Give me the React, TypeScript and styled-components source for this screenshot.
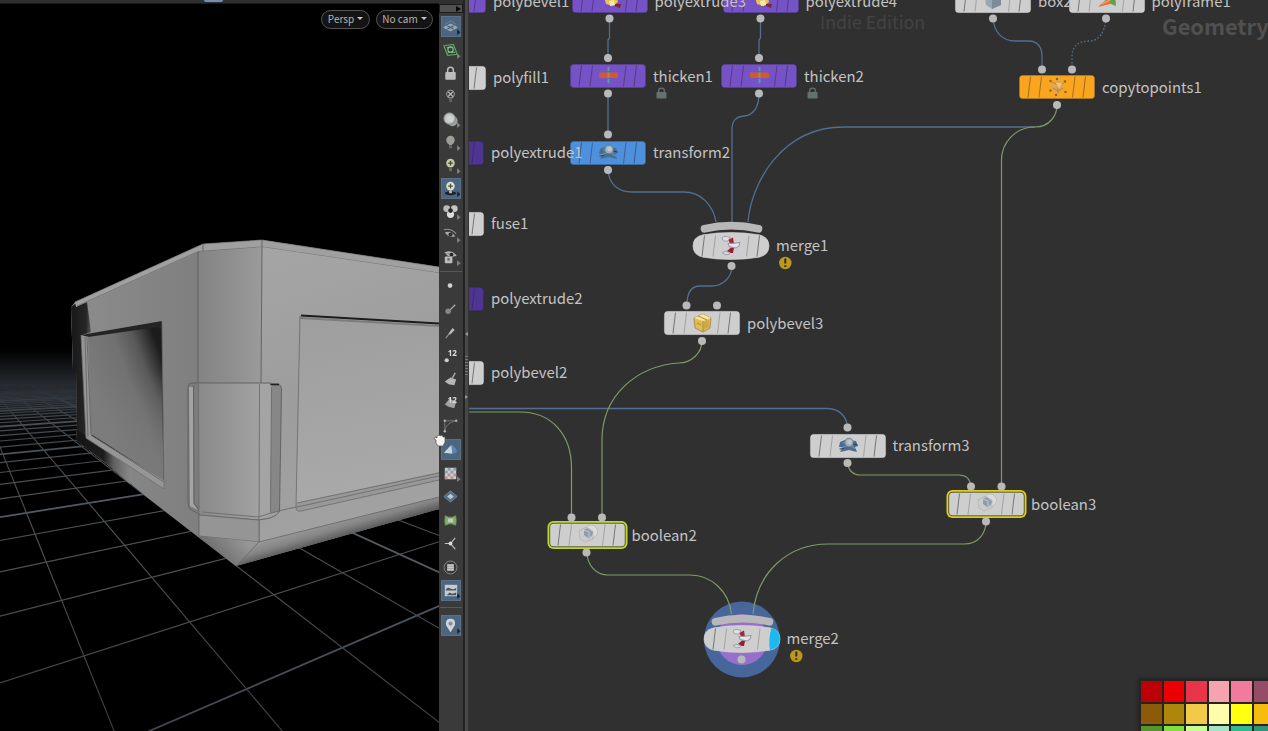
import React from "react";
import styled, { createGlobalStyle } from "styled-components";

const GlobalStyle = createGlobalStyle`
  html, body { margin: 0; padding: 0; background: #303030; overflow: hidden; }
  * { box-sizing: border-box; }
  body { font-family: "Noto Sans CJK SC", "Noto Sans", sans-serif; color: #c3c3c3; }
`;

const Shell = styled.div`
  display: flex;
  width: 1268px;
  height: 731px;
  overflow: hidden;
  background: #303030;
`;

/* ---------- 3D viewport ---------- */

const Viewport = styled.section`
  width: 439px;
  flex: none;
  display: flex;
  flex-direction: column;
  background: #000;
`;

const TopStrip = styled.div`
  height: 4px;
  flex: none;
  display: flex;
  padding-left: 204px;
  background: #303030;
  border-bottom: 1px solid #181818;
`;

const ActiveTab = styled.i`
  width: 19px;
  height: 2px;
  border-radius: 0 0 2px 2px;
  background: #7290ad;
`;

const Stage = styled.div`
  position: relative;
  flex: 1;
  min-height: 0;
`;

const SceneSvg = styled.svg`
  display: block;
  width: 439px;
  height: 727px;
`;

const CameraMenus = styled.div`
  position: absolute;
  top: 5.5px;
  right: 6px;
  display: flex;
  gap: 6px;
`;

const CameraButton = styled.button<{ $w: number }>`
  width: ${(p) => p.$w}px;
  height: 19px;
  display: flex;
  align-items: center;
  justify-content: center;
  gap: 3px;
  padding: 0 0 1px;
  border: 1px solid #555;
  border-radius: 10px;
  background: #141414;
  color: #b4b4b4;
  font-family: inherit;
  font-size: 10px;
  line-height: 16px;
  white-space: nowrap;
`;

const Caret = styled.i`
  border: 3px solid transparent;
  border-top-color: #c4c4c4;
  border-bottom: 0;
`;

const HORIZON = 355;
const depthLines = Array.from({ length: 34 }, (_, i) => {
  const n = i - 4;
  const y = HORIZON + 1 / (0.00461 + 0.00078 * n);
  return { y, major: (n + 8) % 5 === 0 };
}).filter((l) => l.y > 0);
const sideLines = Array.from({ length: 60 }, (_, i) => {
  const n = i - 6;
  return { x: -37 + 400 * (0.402 + 0.447 * n), major: (n + 6) % 5 === 0 };
});

function Scene() {
  return (
    <SceneSvg viewBox="0 4 439 727">
      <defs>
        <linearGradient id="haze" x1="0" y1="350" x2="0" y2="450" gradientUnits="userSpaceOnUse">
          <stop offset="0" stopColor="#000" />
          <stop offset=".15" stopColor="#121416" />
          <stop offset=".35" stopColor="#272b30" />
          <stop offset=".52" stopColor="#1f242a" />
          <stop offset=".7" stopColor="#0a0c0e" />
          <stop offset="1" stopColor="#000" />
        </linearGradient>
        <linearGradient id="fade" x1="0" y1="385" x2="0" y2="731" gradientUnits="userSpaceOnUse">
          <stop offset="0" stopColor="#fff" stopOpacity="0" />
          <stop offset=".1" stopColor="#fff" stopOpacity=".8" />
          <stop offset=".45" stopColor="#fff" stopOpacity=".95" />
          <stop offset="1" stopColor="#fff" stopOpacity=".7" />
        </linearGradient>
        <mask id="gridMask" maskUnits="userSpaceOnUse" x="0" y="355" width="439" height="376">
          <rect x="0" y="355" width="439" height="376" fill="url(#fade)" />
        </mask>
        <linearGradient id="leftFace" x1="86" y1="0" x2="198" y2="0" gradientUnits="userSpaceOnUse">
          <stop offset="0" stopColor="#8b8b8b" />
          <stop offset=".55" stopColor="#848484" />
          <stop offset="1" stopColor="#7f7f7f" />
        </linearGradient>
        <linearGradient id="corner" x1="198" y1="0" x2="262" y2="0" gradientUnits="userSpaceOnUse">
          <stop offset="0" stopColor="#838383" />
          <stop offset=".5" stopColor="#8e8e8e" />
          <stop offset="1" stopColor="#9b9b9b" />
        </linearGradient>
        <linearGradient id="guard" x1="198" y1="0" x2="262" y2="0" gradientUnits="userSpaceOnUse">
          <stop offset="0" stopColor="#8a8a8a" />
          <stop offset=".5" stopColor="#969696" />
          <stop offset="1" stopColor="#a3a3a3" />
        </linearGradient>
        <linearGradient id="front" x1="262" y1="250" x2="360" y2="540" gradientUnits="userSpaceOnUse">
          <stop offset="0" stopColor="#a5a5a5" />
          <stop offset=".5" stopColor="#9d9d9d" />
          <stop offset="1" stopColor="#a2a2a2" />
        </linearGradient>
        <linearGradient id="panel" x1="340" y1="320" x2="370" y2="495" gradientUnits="userSpaceOnUse">
          <stop offset="0" stopColor="#9f9f9f" />
          <stop offset="1" stopColor="#a9a9a9" />
        </linearGradient>
        <linearGradient id="recess" x1="95" y1="400" x2="168" y2="372" gradientUnits="userSpaceOnUse">
          <stop offset="0" stopColor="#7c7c7c" />
          <stop offset=".5" stopColor="#717171" />
          <stop offset=".75" stopColor="#585858" />
          <stop offset="1" stopColor="#1c1c1c" />
        </linearGradient>
        <linearGradient id="recessLow" x1="0" y1="325" x2="0" y2="480" gradientUnits="userSpaceOnUse">
          <stop offset=".3" stopColor="#7c7c7c" stopOpacity="0" />
          <stop offset="1" stopColor="#7c7c7c" stopOpacity=".8" />
        </linearGradient>
        <linearGradient id="shade" x1="74" y1="0" x2="96" y2="0" gradientUnits="userSpaceOnUse">
          <stop offset="0" stopColor="#1a1a1a" />
          <stop offset=".55" stopColor="#262626" />
          <stop offset=".85" stopColor="#6c6c6c" />
          <stop offset="1" stopColor="#8b8b8b" />
        </linearGradient>
        <linearGradient id="sill" x1="77" y1="0" x2="130" y2="0" gradientUnits="userSpaceOnUse">
          <stop offset="0" stopColor="#151515" />
          <stop offset=".5" stopColor="#1d1d1d" />
          <stop offset=".7" stopColor="#626262" />
          <stop offset="1" stopColor="#878787" />
        </linearGradient>
        <linearGradient id="under" x1="330" y1="518" x2="337" y2="542" gradientUnits="userSpaceOnUse">
          <stop offset="0" stopColor="#a0a0a0" />
          <stop offset=".5" stopColor="#858585" />
          <stop offset="1" stopColor="#4a4a4a" />
        </linearGradient>
        <linearGradient id="tip" x1="240" y1="535" x2="215" y2="558" gradientUnits="userSpaceOnUse">
          <stop offset="0" stopColor="#969696" />
          <stop offset="1" stopColor="#6c6c6c" />
        </linearGradient>
      </defs>

      <rect x="0" y="350" width="439" height="381" fill="url(#haze)" />
      <g mask="url(#gridMask)" fill="none">
        {depthLines.map((l) => (
          <path
            key={l.y}
            d={`M0 ${l.y}L1020 ${HORIZON}`}
            stroke={l.major ? "#59636d" : "#565a5e"}
            strokeWidth={l.major ? 1.8 : 1.15}
          />
        ))}
        {sideLines.map((l) => (
          <path
            key={l.x}
            d={`M-37 ${HORIZON}L${l.x} ${HORIZON + 400}`}
            stroke={l.major ? "#5b6269" : "#54585b"}
            strokeWidth={l.major ? 1.8 : 1.15}
          />
        ))}
      </g>

      {/* hull silhouette */}
      <path d="M71 307L75 302L203 244L262 240L439 267V509L236 566L220 553L187 528L147 497L108 465L76 440L77 430L76 369H73Z" fill="#858585" />
      <path d="M75 306L198 251L199 536L236 566L187 528L147 497L108 465L76 440L77 430V369H73L71 307Z" fill="url(#leftFace)" />
      <path d="M71 307L75 304L87 302L91 332L82 335L86 438L98 452L108 465L76 440L77 430L76 369H73Z" fill="url(#shade)" />
      <path d="M77 430L86 436L130 467V484L108 465L76 440Z" fill="url(#sill)" />
      <path d="M75 302L203 244L262 240L439 267V273L262 247L198 252L76 307Z" fill="#a0a0a0" />
      <path d="M77 306L198 251.500L262 247L439 273" fill="none" stroke="#727272" strokeWidth=".9" />
      <path d="M75 302L203 244L262 240L439 267" fill="none" stroke="#7a7a7a" strokeWidth=".7" />

      {/* left window */}
      <path d="M81 335L162 321L164 488L86 438Z" fill="#242424" />
      <path d="M81 335L89 337L92 436L164 480V489L86 438Z" fill="#969696" />
      <path d="M88 337L158 327L161 329L163.500 480L91 434Z" fill="url(#recess)" />
      <path d="M88 337L158 327L161 329L163.500 480L91 434Z" fill="url(#recessLow)" />
      <path d="M87 337L91 435L164 482M85 337L88 437" fill="none" stroke="#606060" strokeWidth=".8" />
      <path d="M81 335L86 438L164 489L162 321" fill="none" stroke="#6f6f6f" strokeWidth=".8" />

      {/* rounded corner */}
      <path d="M198 252L262 247L261 384H198Z" fill="url(#corner)" />
      <path d="M262 247L439 273V497L259 542V384H261Z" fill="url(#front)" />
      <path d="M198 252V384M262 247L261 384M262 240V247M203 244V251" fill="none" stroke="#5f5f5f" strokeWidth=".9" />

      {/* corner guard */}
      <path d="M198 383H262V520L200 514Z" fill="url(#guard)" />
      <path d="M259 384H272L270 514L259 519Z" fill="#a4a4a4" />
      <path d="M187.500 384Q188 382 191 383H198V513L189 507Z" fill="#7c7c7c" />
      <path d="M189 387H193.500V504L198 510L190 506Z" fill="#a4a4a4" />
      <path d="M193.500 386L194 503L199 510" fill="none" stroke="#5a5a5a" strokeWidth=".9" />
      <path d="M271.500 384H279L281.500 388L279.500 512L270.500 513Z" fill="#878787" />
      <path d="M270 384H278Q281.500 385 281.500 389L279.500 511Q278 515 270 518L259 520L202 516L190 509Q188 507 188 500V387Q188 383 192 383H271" fill="none" stroke="#5e5e5e" strokeWidth=".9" />
      <path d="M270.500 384.500H279" stroke="#222" strokeWidth="1.600" />
      <path d="M271.500 387L270.500 513M259.500 384L259 542M198.500 384L199 536M202 512L258 517L278 511L296 507" fill="none" stroke="#6c6c6c" strokeWidth=".9" />
      <path d="M199 515L259 520V542L199 536Z" fill="#959595" />
      <path d="M199 515L259 520V542L199 536Z" fill="none" stroke="#666" strokeWidth=".8" />
      <path d="M199 536L259 542L236 566L200 538Z" fill="url(#tip)" />
      <path d="M259 542L439 497V509L236 566Z" fill="url(#under)" />
      <path d="M236 566L259 542L439 497" fill="none" stroke="#6c6c6c" strokeWidth=".9" />

      {/* right window */}
      <path d="M300 317L439 325V480L301 511Q296 512 296 507Z" fill="url(#panel)" />
      <path d="M296 503L439 472V480L299 511Q296 511 296 507Z" fill="#989898" />
      <path d="M300 318L439 326" stroke="#7c7c7c" strokeWidth="2" fill="none" />
      <path d="M301 315.500L439 323.500" stroke="#1c1c1c" strokeWidth="2" fill="none" />
      <path d="M300 316L296 507Q296 512 301 511L439 480M297 503L439 473M297 507L439 476" fill="none" stroke="#686868" strokeWidth=".8" />
    </SceneSvg>
  );
}

/* ---------- display toolbar ---------- */

const Toolbar = styled.aside`
  width: 24px;
  flex: none;
  display: flex;
  flex-direction: column;
  align-items: center;
  background: #3a3a3a;
  border-top: 4px solid #303030;
`;

const Expander = styled.div`
  width: 24px;
  height: 9px;
  margin-bottom: 2.4px;
  display: flex;
  align-items: center;
  justify-content: flex-end;
  padding-right: 1px;
  border: 1px solid #1c1c1c;
  background: #505050;
`;

const ExpanderArrow = styled.i`
  border: 3px solid transparent;
  border-left: 5px solid #080808;
  border-right: 0;
`;

const ToolGroup = styled.div<{ $pitch: number }>`
  display: grid;
  grid-auto-rows: ${(p) => p.$pitch}px;
  align-items: center;
`;

const ToolButton = styled.div<{ $on?: boolean }>`
  width: 20px;
  height: 21px;
  display: flex;
  align-items: center;
  justify-content: center;
  background: ${(p) => (p.$on ? "#4d6680" : "transparent")};
  border: 1px solid ${(p) => (p.$on ? "#58718a" : "transparent")};
`;

const ToolIcon = styled.svg`
  width: 19px;
  height: 19px;
  flex: none;
  margin-right: 1.5px;
  overflow: visible;
  opacity: 0.9;
`;

const Rule = styled.hr<{ $gap: number }>`
  width: 22px;
  height: 1px;
  margin: ${(p) => p.$gap}px 0;
  border: 0;
  background: #575757;
`;

const Splitter = styled.div`
  width: 6px;
  flex: none;
  display: flex;
  flex-direction: column;
  justify-content: center;
  align-items: center;
  background: #484848;
  border-left: 2px solid #232323;
  border-right: 1px solid #333;
`;

const Grip = styled.div`
  width: 3px;
  height: 19px;
  margin: 20px 0;
  background: repeating-linear-gradient(#777 0 1px, #444 1px 3px);
`;

const GripArrow = styled.i<{ $left?: boolean }>`
  border: 2px solid transparent;
  ${(p) => (p.$left ? "border-right: 3px solid #999; border-left: 0;" : "border-left: 3px solid #999; border-right: 0;")}
`;

const TinyNumber = styled.text`
  font: 700 8.5px "Noto Sans", sans-serif;
  fill: #ededed;
`;
function NumText() {
  return <TinyNumber x="6" y="9.500">12</TinyNumber>;
}

const G = "#c9cbca";
const tools: Record<string, React.ReactNode> = {
  grid: <><path d="M2 10L9 6.500L16 10L9 13.500Z" fill="#8fa2ae" stroke="#c0c9cd" strokeWidth=".9" /><path d="M5.500 11.800L12.500 8.200M5.500 8.200L12.500 11.800" fill="none" stroke="#3f5263" /><path d="M3 7L9 3L15 7" fill="none" stroke="#6f8799" /></>,
  plane: <><path d="M2 4L12 2.500L16 13L6 14Z" fill="#29442c" stroke="#6caa70" strokeWidth="1.300" /><path d="M5 6H10M6 11H14" stroke="#8ac48d" /><circle cx="9" cy="8" r="2.800" fill="none" stroke="#9bd09e" strokeWidth="1.200" /></>,
  lock: <><path d="M6 8V5.500Q6 2.500 9 2.500T12 5.500V8" fill="none" stroke={G} strokeWidth="1.600" /><rect x="3.500" y="7.500" width="11" height="8" rx="1" fill={G} /></>,
  nolight: <><circle cx="9" cy="6.500" r="4" fill="#333" stroke="#a9abaa" strokeWidth="1.100" /><path d="M6.500 4L11.500 9M11.500 4L6.500 9" stroke={G} strokeWidth="1.300" /><path d="M7.500 11H10.500V15H7.500Z" fill="#666" /></>,
  sphere: <><circle cx="11" cy="10.500" r="5.500" fill="#a5acab" /><circle cx="8" cy="8" r="6" fill="#cfd4d1" stroke="#858c8a" /><circle cx="8.500" cy="8.500" r="3.500" fill="#dfe3e0" /></>,
  bulb: <><circle cx="9" cy="6.500" r="4.500" fill="#a8a8a5" /><path d="M7 9H11L10.500 12H7.500Z" fill="#a8a8a5" /><path d="M7.500 12.500H10.500V15H7.500Z" fill="#707070" /></>,
  addlight: <><circle cx="9" cy="6.500" r="4.500" fill="#d9dbb0" /><path d="M9 4V9M6.500 6.500H11.500" stroke="#47493c" strokeWidth="1.400" /><path d="M7.500 11H10.500V15H7.500Z" fill="#74765f" /></>,
  shadow: <><ellipse cx="9" cy="14" rx="6" ry="2" fill="#14191f" /><circle cx="9" cy="6.500" r="4.500" fill="#eceecd" /><path d="M9 4V9M6.500 6.500H11.500" stroke="#4d5044" strokeWidth="1.300" /><path d="M7.500 11H10.500V14H7.500Z" fill="#c5c8b0" /></>,
  balls: <><circle cx="5" cy="6" r="3.500" fill={G} /><circle cx="13" cy="6" r="3.500" fill="#d7d7d7" /><circle cx="9" cy="12" r="3.800" fill="#eee" /><circle cx="9" cy="8" r="2.500" fill="#252525" /></>,
  eye: <><path d="M2 4Q9 2 15 8" fill="none" stroke="#999" strokeWidth="1.200" /><path d="M3 7Q9 4 14 11Q7 13 3 7" fill="#b5b5b5" /><circle cx="9" cy="9" r="2.200" fill="#303030" /></>,
  lockeye: <><path d="M3 4Q10 1 15 7Q10 9 5 6" fill="#aaa" stroke="#cecece" /><circle cx="10" cy="6" r="2" fill="#222" /><rect x="3" y="8" width="8" height="7" rx="1" fill="#ccc" /><circle cx="7" cy="11" r="1.500" fill="#777" /></>,
  point: <circle cx="8.500" cy="9" r="2.500" fill="#e3e3e3" />,
  normal: <><path d="M7 12L14 5" stroke="#bbb" strokeWidth="1.300" /><circle cx="6.500" cy="12" r="2.900" fill="#8b9291" /></>,
  trail: <><path d="M4 15L12 5" stroke="#999" strokeWidth="1.300" /><path d="M7 10L11 4.500L13.500 6.500L8.500 11.500Z" fill="#c9c9c9" /></>,
  num: <><circle cx="5" cy="14" r="2.200" fill="#ddd" /><NumText /></>,
  prim: <><path d="M3 11L9 7L15 9L13 15L7 14Z" fill="#c5c5c5" /><path d="M10 9L14 2" stroke="#b7b7b7" strokeWidth="1.500" /></>,
  primnum: <><path d="M3 11L8 5L15 8L13 15L7 13.500Z" fill="#adadad" /><NumText /></>,
  profile: <><path d="M3 3V15M3 3H15M3 13Q4 6 14 3" fill="none" stroke="#7e7e7e" /><circle cx="3" cy="3" r="1.300" fill="#bbb" /><circle cx="3" cy="14" r="1.300" fill="#bbb" /><circle cx="15" cy="3" r="1.300" fill="#bbb" /></>,
  wedge: <><path d="M2 12.500L10 4L11 13.500Z" fill="#d5e0e8" /><path d="M10 4Q15 7 16 12L11 13.500Z" fill="#5d8cb8" /></>,
  checker: <><rect x="3" y="3" width="12" height="12" fill="#ddd" />{[0, 1, 2, 3].map((r) => [0, 1, 2, 3].map((c) => (r + c) % 2 ? <rect key={`${r}${c}`} x={3 + c * 3} y={3 + r * 3} width="3" height="3" fill={r < 2 ? "#97a8b8" : "#c0a09d"} /> : null))}</>,
  diamond: <><path d="M2 9L9 3L16 9L9 15Z" fill="#557696" stroke="#6f8ba5" /><path d="M5.500 9L9 6L12.500 9L9 12Z" fill="#cfd8de" /></>,
  green: <><path d="M3.500 4L7 5.500H11L14.500 4L15 9L14.500 14L10.500 12.500H7.500L3.500 14L3 9Z" fill="#8fbb78" stroke="#699d54" /><path d="M6.500 7H11.500V11H6.500Z" fill="#cfe0c8" /></>,
  axes: <><path d="M9 9L14 3M9 9H3M9 9L14 15" stroke="#d0d0d0" strokeWidth="1.200" /><circle cx="9" cy="9" r="2" fill="#eee" /></>,
  list: <><circle cx="9" cy="9" r="6.800" fill="none" stroke="#8e8e8e" /><rect x="5.500" y="5.500" width="7" height="7" fill="#d8d8d8" /><path d="M5.500 7.800H12.500M5.500 10.200H12.500" stroke="#999" strokeWidth=".7" /></>,
  image: <><rect x="3" y="3" width="13" height="12" fill="#d4d6d7" /><path d="M4 8Q6 5 9 7T15 6V9H4ZM5 14L8 11L11 12.500L15 11V14Z" fill="#4b565f" /></>,
  pin: <><path d="M9 16L4.500 9Q3 2 9 2T13.500 9Z" fill="#dce1e2" /><circle cx="9" cy="7" r="2.200" fill="#8496a4" /></>,
};

const corner = new Set(["grid", "plane", "sphere", "bulb", "addlight", "shadow", "balls", "eye", "lockeye", "checker", "image", "pin"]);
const lit = new Set(["grid", "shadow", "wedge", "image", "pin"]);

function Tool({ name }: { name: string }) {
  return (
    <ToolButton $on={lit.has(name)}>
      <ToolIcon viewBox="-1 -1 20 20">
        {tools[name]}
        {corner.has(name) && <path d="M16 12L19.500 15L16 18Z" fill={lit.has(name) ? "#161d25" : "#8a8a8a"} />}
      </ToolIcon>
    </ToolButton>
  );
}

/* ---------- network editor ---------- */

const Network = styled.main`
  position: relative;
  flex: 1;
  overflow: hidden;
  background: #303030;
`;

const Wires = styled.svg`
  position: absolute;
  inset: 0;
  width: 799px;
  height: 731px;
  fill: none;
`;

const NodeItem = styled.div<{ $x: number; $y: number }>`
  position: absolute;
  left: ${(p) => p.$x - 469}px;
  top: ${(p) => p.$y}px;
  height: 24px;
  display: flex;
  align-items: center;
  gap: 7px;
`;

const NodeShape = styled.svg`
  width: 76px;
  height: 24px;
  flex: none;
  overflow: visible;
`;

const NodeLabel = styled.span`
  position: relative;
  z-index: 1;
  margin-top: -1px;
  font-size: 14.9px;
  line-height: 24px;
  white-space: nowrap;
  color: #c3c3c3;
`;

const Watermark = styled.span<{ $x: number; $y: number; $size: number; $bold?: boolean }>`
  position: absolute;
  left: ${(p) => p.$x - 469}px;
  top: ${(p) => p.$y}px;
  font-size: ${(p) => p.$size}px;
  font-weight: ${(p) => (p.$bold ? 700 : 400)};
  line-height: 30px;
  color: ${(p) => (p.$bold ? "#505050" : "#434343")};
  white-space: nowrap;
`;

const Palette = styled.div`
  position: absolute;
  left: 670px;
  top: 679px;
  display: grid;
  grid-template-columns: repeat(6, 20.5px);
  grid-auto-rows: 20.5px;
  gap: 2.1px;
  padding: 2px;
  background: #242420;
  box-shadow: 0 0 3px 1px #242424;
`;

const Swatch = styled.i<{ $c: string }>`
  background: ${(p) => p.$c};
`;

type Glyph = "extrude" | "thick" | "xform" | "copy" | "box" | "carrot" | "bevel" | "merge" | "bool";

function NodeGlyph({ kind }: { kind: Glyph }) {
  switch (kind) {
    case "thick":
      return <><path d="M38.500 3V20" stroke="#4ba8ae" strokeWidth="1.800" strokeDasharray="4 2" /><rect x="29" y="8.500" width="19" height="5.500" rx="1" fill="#cf5b2d" /><path d="M38.500 8.500V14" stroke="#a98a50" strokeWidth="2" /></>;
    case "extrude":
      return <><path d="M31 5L44 4L46 13L41 17L34 15Z" fill="#e5c45b" /><path d="M37 12L42 11L43 16L38 17Z" fill="#f6e9a4" /><path d="M43 15L49 15L48 19L43 17Z" fill="#7d243f" /></>;
    case "xform":
      return <><path d="M30 8L35 6L46 7L48 12L45 13L47 18L39 16L30 18L33 13L29 13Z" fill="#4a6c90" /><path d="M31 14L38 11L46 15M33 9L44 12" fill="none" stroke="#7f99b2" strokeWidth=".9" /><path d="M29.500 15L34 14.500M43 10L47.500 11" stroke="#2a425c" /><circle cx="39" cy="8.500" r="4.300" fill="#9fafbb" stroke="#62778a" strokeWidth=".8" /><circle cx="39.500" cy="8" r="2.400" fill="#bfc6c8" /></>;
    case "copy":
      return <><path d="M33 6.500L41 5L45 9L44 16L38 18L33 15Z" fill="#e0a654" /><path d="M33 7L39 10L45 8M39 10V18M34 13L39 16L44 13" fill="none" stroke="#b57c36" strokeWidth=".8" /><path d="M37 8L43 8L40 14Z" fill="#edc77f" />{[[31.5, 6], [38, 4], [46, 6.5], [31.5, 15.5], [37, 20], [46.5, 17]].map(([x, y]) => <circle key={`${x}${y}`} cx={x} cy={y} r="1.200" fill="#925e2c" />)}</>;
    case "box":
      return <><path d="M30 8L39 5L46 9V16L37 20L31 16Z" fill="#98a7b5" /><path d="M37 11L46 9V16L37 20Z" fill="#7e8c9a" /></>;
    case "carrot":
      return <><path d="M29 18L40 8L45 14Z" fill="#dc7638" /><path d="M40 8L46 5L47 17L42 15Z" fill="#669e50" /><path d="M33 15L41 11" stroke="#f5b267" /></>;
    case "bevel":
      return <><path d="M30 7L39 3L47 7L46 17L39 21L31 17Z" fill="#dfbd55" stroke="#9f803d" strokeWidth=".8" /><path d="M30 7L39 3L47 7L39 10Z" fill="#f5e5a0" /><path d="M39 10V21M34 5L43 9M33 12L37 14" fill="none" stroke="#a18131" strokeWidth=".9" /><path d="M40 11L45 9V16L40 18Z" fill="#cfa743" /></>;
    case "merge":
      return <><path d="M35 6L40 3.500L41 10L37 9Z" fill="#a52638" /><path d="M34 17L38 13.500L41 14L40 19L35 19Z" fill="#9b1d30" /><path d="M29 4Q31 1 37 3.500L35 7Q30 8 29 4Z" fill="#dedee4" stroke="#9293a0" strokeWidth=".8" /><path d="M35 9.500Q41 9.500 47 8.500Q47 13 43 14L36 12.500Z" fill="#e4e4e9" stroke="#888d99" strokeWidth=".9" /><path d="M29 18.500Q32 16 37 18.500L36 20.500Q32 22 29 18.500Z" fill="#d5d6dc" stroke="#9596a2" strokeWidth=".8" /></>;
    case "bool":
      return <><circle cx="42" cy="8.500" r="6.500" fill="#dcdcdc" stroke="#b4b4b4" strokeWidth=".7" /><path d="M30 8L37 4L44 8V16L36 19L31 16Z" fill="#c7c7c7" fillOpacity=".45" stroke="#afb5b4" strokeWidth=".8" /><path d="M35 7L38 5L44 9L43 13L39 15L35 12Z" fill="#919dac" /><path d="M35 7L40 9V14" fill="none" stroke="#c2cad2" /></>;
  }
}

type NodeSpec = {
  name: string;
  x: number;
  y: number;
  fill?: string;
  glyph?: Glyph;
  ring?: string;
  round?: boolean;
  active?: boolean;
  locked?: boolean;
  warn?: boolean;
};

const WHITE = "#cecece";
const PURPLE = "#7552c6";
const nodes: NodeSpec[] = [
  { name: "polybevel1", x: 410, y: -11, fill: PURPLE },
  { name: "polyfill1", x: 410, y: 65.5 },
  { name: "polyextrude1", x: 408, y: 140.5, fill: "#4f3592" },
  { name: "fuse1", x: 408, y: 211.5 },
  { name: "polyextrude2", x: 408, y: 286.5, fill: "#4f3592" },
  { name: "polybevel2", x: 408, y: 360.5 },
  { name: "polyextrude3", x: 571.5, y: -11, fill: PURPLE, glyph: "extrude" },
  { name: "polyextrude4", x: 722.5, y: -11, fill: PURPLE, glyph: "extrude" },
  { name: "thicken1", x: 570, y: 64, fill: PURPLE, glyph: "thick", locked: true },
  { name: "thicken2", x: 721, y: 64, fill: PURPLE, glyph: "thick", locked: true },
  { name: "transform2", x: 570, y: 140.5, fill: "#4d90dc", glyph: "xform" },
  { name: "box2", x: 955, y: -11, glyph: "box" },
  { name: "polyframe1", x: 1068.5, y: -11, glyph: "carrot" },
  { name: "copytopoints1", x: 1019, y: 75, fill: "#f9a51d", glyph: "copy" },
  { name: "merge1", x: 693, y: 233.5, glyph: "merge", round: true, warn: true },
  { name: "polybevel3", x: 664, y: 311, glyph: "bevel" },
  { name: "transform3", x: 809.5, y: 433.5, glyph: "xform" },
  { name: "boolean3", x: 948, y: 492, glyph: "bool", ring: "#e0cb22" },
  { name: "boolean2", x: 548.5, y: 523, glyph: "bool", ring: "#bfd92c" },
  { name: "merge2", x: 703.5, y: 626.5, glyph: "merge", round: true, active: true, warn: true },
];

const ROUND = "M10 .8Q38 -3.800 66 .8Q76 3 76 12T66 23.200Q38 27.800 10 23.200Q0 21 0 12T10 .8Z";

function NetworkNode({ n }: { n: NodeSpec }) {
  const fill = n.fill ?? WHITE;
  const dark = fill !== WHITE;
  return (
    <NodeItem $x={n.x} $y={n.y}>
      <NodeShape viewBox="0 0 76 24">
        {n.active && <><circle cx="38" cy="12.500" r="38" fill="#47669b" /><circle cx="38" cy="12.500" r="25.500" fill="#9670cb" /></>}
        {n.round && <path d="M11.500 -5.200Q38 -11.500 65.500 -5.200" fill="none" stroke="#b8b8b8" strokeWidth="7.600" strokeLinecap="round" />}
        {n.ring && <><rect x="-1.500" y="-2" width="80" height="28" rx="6" fill={n.ring} /><rect x=".2" y="-.2" width="76.500" height="24.400" rx="4.500" fill="#50501c" /></>}
        {n.round ? (
          <path d={ROUND} fill={WHITE} stroke="#d8d8d8" strokeWidth=".6" />
        ) : (
          <rect x={n.ring ? 1.2 : 0.3} y={n.ring ? 0.8 : 0.3} width={n.ring ? 74.5 : 75.4} height={n.ring ? 22.4 : 23.4} rx="3.500" fill={fill} stroke={dark ? "#000" : "#fff"} strokeOpacity=".2" strokeWidth=".7" />
        )}
        {n.active && <path d="M67.500 1.100Q76 3.500 76 12T66 23.200Q64 12 67.500 1.100Z" fill="#18baf0" />}
        <g stroke={dark ? "#281c32" : "#606060"} strokeOpacity={dark ? 0.5 : 0.9} strokeWidth=".9">
          <path d={n.active ? "M11.500 1.500L9 22.500" : "M11.500 1.500L9 22.500M66.500 1.500L64 22.500"} />
          <path d="M22.500 1.500L20 22.500M56 1.500L53.500 22.500" strokeOpacity=".45" />
        </g>
        {n.glyph && <NodeGlyph kind={n.glyph} />}
        {n.locked && <g fill="#65726b"><rect x="86.500" y="28" width="10" height="6.500" rx=".7" /><path d="M88.700 28.500V26.500Q88.700 24.200 91.500 24.200T94.300 26.500V28.500" fill="none" stroke="#65726b" strokeWidth="1.300" /></g>}
        {n.warn && <><circle cx="92.300" cy="29" r="6.200" fill="#bb991f" /><path d="M92.300 24.500V29.500M92.300 31.300V33" stroke="#352d10" strokeWidth="2" /></>}
      </NodeShape>
      <NodeLabel>{n.name}</NodeLabel>
    </NodeItem>
  );
}

const blueWires = [
  "M609.500 18V38L608 40V58",
  "M608 93V134",
  "M608 170C609 184 618 192 632 192H684C701 192 713 205 716 222",
  "M760.500 18V38L759 40V58",
  "M759 93C759 108 753 115 744 116C736 117 732 120 732 130V222",
  "M748 222C751 185 780 127 844 127H1035",
  "M993 18C994 33 1003 41 1015 41H1029C1038 41 1042 48 1042 56V69",
  "M732 266C732 278 722 286 712 286H700C690 286 687 294 687 305",
  "M469 408.500H828C840 409 846 417 848 427",
];
const greenWires = [
  "M1057 105C1057 115 1050 127 1035 127C1015 127 1001.500 143 1001.500 160V486",
  "M702 341C702 353 691 363 679 363C636 366 602 396 602 440V517",
  "M469 412H520C552 412 571.500 435 571.500 468V517",
  "M848 463C848 471 854 475 860 475H959C966 475 970 479 971 486",
  "M986 521C986 534 978 544 964 544H828C788 544 757 572 753 614",
  "M587 552C587 565 596 575 608 575H690C712 575 729 592 731.500 614",
];
const ports = [
  [609.5, 18.5], [760.5, 18.5], [608, 58], [759, 58], [608, 93.5], [759, 93.5], [608, 134.5], [608, 170],
  [993, 18.5], [1106, 18.5], [1042, 69.5], [1072, 69.5], [1057, 105], [731.5, 266], [686.5, 305.5], [717, 305.5],
  [702, 341], [847.5, 427.5], [847.5, 463], [971, 486.5], [1001.5, 486.5], [986, 521.5], [571.5, 517.5],
  [602, 517.5], [586.5, 552.5], [741.5, 659.5],
];

const swatches = [
  "#bb0008", "#ea0004", "#e93549", "#f6a3af", "#f37a9f", "#964b66",
  "#8c5a08", "#ae8609", "#f3c94a", "#fffdaa", "#ffff10", "#f8bc0e",
  "#56952a", "#83df40", "#c8ff92", "#a3e4c6", "#32b990", "#359277",
];

const HandCursor = styled.svg`
  position: absolute;
  left: 433px;
  top: 434px;
  width: 14px;
  height: 14px;
`;

export default function App() {
  const upper = ["grid", "plane", "lock", "nolight", "sphere", "bulb", "addlight", "shadow", "balls", "eye", "lockeye"];
  const lower = ["point", "normal", "trail", "num", "prim", "primnum", "profile", "wedge", "checker", "diamond", "green", "axes", "list", "image"];
  return (
    <>
      <GlobalStyle />
      <Shell>
        <Viewport>
          <TopStrip><ActiveTab /></TopStrip>
          <Stage>
            <Scene />
            <CameraMenus>
              <CameraButton $w={49}>Persp<Caret /></CameraButton>
              <CameraButton $w={57}>No cam<Caret /></CameraButton>
            </CameraMenus>
          </Stage>
        </Viewport>
        <Toolbar>
          <Expander><ExpanderArrow /></Expander>
          <ToolGroup $pitch={23.1}>{upper.map((t) => <Tool key={t} name={t} />)}</ToolGroup>
          <Rule $gap={1.6} />
          <ToolGroup $pitch={23.5}>{lower.map((t) => <Tool key={t} name={t} />)}</ToolGroup>
          <Rule $gap={4} />
          <ToolGroup $pitch={27}><Tool name="pin" /></ToolGroup>
        </Toolbar>
        <Splitter><GripArrow $left /><Grip /><GripArrow /></Splitter>
        <Network>
          <Watermark $x={820} $y={6} $size={17.8}>Indie Edition</Watermark>
          <Watermark $x={1162} $y={11} $size={21.8} $bold>Geometry</Watermark>
          {nodes.map((n) => <NetworkNode key={n.name} n={n} />)}
          <Wires viewBox="469 0 799 731">
            {blueWires.map((d) => <path key={d} d={d} stroke="#506f93" strokeWidth="1.300" />)}
            <path d="M1106 18C1105 33 1098 41 1090 41C1078 41 1072 46 1072 58V69" stroke="#5b7694" strokeWidth="1.300" strokeDasharray="1.500 2" />
            {greenWires.map((d) => <path key={d} d={d} stroke="#7d9c68" strokeWidth="1.200" />)}
            {ports.map(([x, y]) => <circle key={`${x}-${y}`} cx={x} cy={y} r="4" fill="#b9b9b9" />)}
          </Wires>
          <Palette>{swatches.map((c) => <Swatch key={c} $c={c} />)}</Palette>
        </Network>
      </Shell>
      <HandCursor viewBox="0 0 14 14">
        <path d="M3 6L1 5L2 3L4 4V2L6 1L7 2L9 1L10 3L12 3V8L10 12H5L3 9Z" fill="#f3f3f3" stroke="#555" strokeWidth=".7" />
      </HandCursor>
    </>
  );
}
